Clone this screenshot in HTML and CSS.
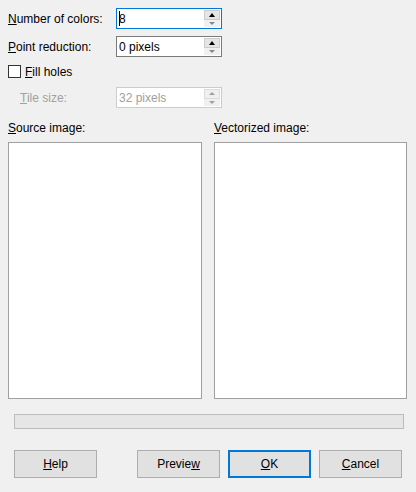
FILE: index.html
```html
<!DOCTYPE html>
<html>
<head>
<meta charset="utf-8">
<link rel="stylesheet" href="styles.css">
</head>
<body>
<div class="dialog">
  <div class="form">
    <div class="row r1">
      <label class="lbl"><u>N</u>umber of colors:</label>
      <div class="spin focus">
        <div class="val"><span class="caret"></span>8</div>
        <div class="btns"><div class="up"><span class="tri-up"></span></div><div class="down"><span class="tri-down"></span></div></div>
      </div>
    </div>
    <div class="row r2">
      <label class="lbl"><u>P</u>oint reduction:</label>
      <div class="spin">
        <div class="val">0 pixels</div>
        <div class="btns"><div class="up"><span class="tri-up"></span></div><div class="down"><span class="tri-down"></span></div></div>
      </div>
    </div>
    <div class="row r3">
      <span class="check"></span><label class="cblbl"><u>F</u>ill holes</label>
    </div>
    <div class="row r4">
      <label class="lbl sub disabled"><u>T</u>ile size:</label>
      <div class="spin dis">
        <div class="val">32 pixels</div>
        <div class="btns"><div class="up"><span class="tri-up"></span></div><div class="down"><span class="tri-down"></span></div></div>
      </div>
    </div>
  </div>
  <div class="images">
    <div class="col left">
      <div class="ilbl"><u>S</u>ource image:</div>
      <div class="imgbox"></div>
    </div>
    <div class="col right">
      <div class="ilbl"><u>V</u>ectorized image:</div>
      <div class="imgbox"></div>
    </div>
  </div>
  <div class="progress"></div>
  <div class="buttons">
    <button class="btn"><u>H</u>elp</button>
    <div class="spacer"></div>
    <button class="btn">Previe<u>w</u></button>
    <button class="btn ok"><u>O</u>K</button>
    <button class="btn"><u>C</u>ancel</button>
  </div>
</div>
</body>
</html>
```
FILE: styles.css
```css
html, body {
  margin: 0;
  padding: 0;
  background: #f0f0f0;
  width: 416px;
  height: 492px;
  overflow: hidden;
}
body {
  font-family: "Liberation Sans", Arial, sans-serif;
  font-size: 12px;
  color: #000;
}
.dialog {
  padding: 8px 0 0 8px;
  display: flex;
  flex-direction: column;
}
.form {
  display: flex;
  flex-direction: column;
}
.row {
  display: flex;
  align-items: center;
  height: 21px;
}
.r2 { margin-top: 7px; }
.r3 { margin-top: 4px; }
.r4 { margin-top: 5px; }
.lbl {
  width: 108px;
  flex: none;
}
.lbl.sub {
  padding-left: 12px;
  width: 96px;
}
.disabled { color: #a0a0a0; }
.spin {
  box-sizing: border-box;
  width: 106px;
  height: 21px;
  border: 1px solid #7a7a7a;
  background: #fff;
  display: flex;
  align-items: stretch;
}
.spin.focus { border-color: #0078d7; }
.spin.dis { border-color: #cccccc; color: #a0a0a0; }
.val {
  flex: 1;
  padding-left: 2px;
  display: flex;
  align-items: center;
}
.caret {
  display: inline-block;
  width: 1px;
  height: 15px;
  background: #000;
  margin-right: -1px;
}
.btns {
  width: 16px;
  margin: 1px 1px 1px 0;
  display: flex;
  flex-direction: column;
}
.up {
  box-sizing: border-box;
  height: 10px;
  background: #e5e5e5;
  border: 1px solid #cccccc;
  display: flex;
  align-items: center;
  justify-content: center;
}
.down {
  box-sizing: border-box;
  height: 8px;
  background: #f0f0f0;
  display: flex;
  align-items: center;
  justify-content: center;
}
.tri-up {
  width: 0; height: 0;
  border-left: 3.5px solid transparent;
  border-right: 3.5px solid transparent;
  border-bottom: 4px solid #000;
}
.tri-down {
  width: 0; height: 0;
  border-left: 3px solid transparent;
  border-right: 3px solid transparent;
  border-top: 3px solid #888;
}
.dis .up { background: #f0f0f0; border-color: #dcdcdc; }
.dis .tri-up { border-bottom-color: #a0a0a0; border-left-width: 3px; border-right-width: 3px; border-bottom-width: 3px; }
.dis .tri-down { border-top-color: #a0a0a0; }
.check {
  box-sizing: border-box;
  width: 13px;
  height: 13px;
  border: 1px solid #333;
  background: #fff;
  margin-right: 4px;
}
.images {
  display: flex;
  margin-top: 12px;
}
.col { display: flex; flex-direction: column; }
.left { width: 194px; }
.right { width: 193px; margin-left: 12px; }
.ilbl {
  height: 16px;
  line-height: 16px;
  margin-bottom: 6px;
}
.imgbox {
  box-sizing: border-box;
  height: 257px;
  border: 1px solid #a0a0a0;
  background: #fff;
}
.progress {
  box-sizing: border-box;
  width: 390px;
  height: 15px;
  margin: 15px 0 0 6px;
  background: #e6e6e6;
  border: 1px solid #bcbcbc;
}
.buttons {
  display: flex;
  margin: 21px 0 0 6px;
  width: 388px;
}
.spacer { width: 32px; flex: none; }
.btn {
  box-sizing: border-box;
  width: 83px;
  height: 28px;
  background: #e1e1e1;
  border: 1px solid #adadad;
  font: inherit;
  color: #000;
  padding: 0;
  margin-right: 8px;
}
.btn:last-child { margin-right: 0; }
.btn.ok { border: 2px solid #0078d7; }
```
